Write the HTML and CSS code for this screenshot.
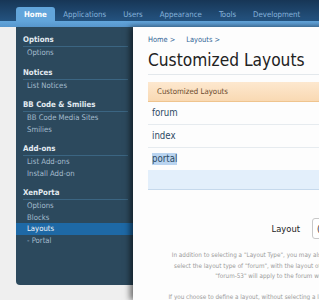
FILE: index.html
```html
<!DOCTYPE html>
<html lang="en">
<head>
    <meta charset="UTF-8">
    <meta name="viewport" content="width=device-width, initial-scale=1.0">
    <title>Customized Layouts</title>
    <link rel="stylesheet" href="styles.css">
</head>
<body>
    <div class="topBar">
        <div class="tabs">
            <a class="tab active" href="#">Home</a>
            <a class="tab" href="#">Applications</a>
            <a class="tab" href="#">Users</a>
            <a class="tab" href="#">Appearance</a>
            <a class="tab" href="#">Tools</a>
            <a class="tab" href="#">Development</a>
        </div>
    </div>
    <div class="tabStrip"></div>

    <div class="page">
        <div class="sideNav">
            <div class="navGroup">
                <div class="navHeading">Options</div>
                <a class="navItem" href="#">Options</a>
            </div>
            <div class="navGroup">
                <div class="navHeading">Notices</div>
                <a class="navItem" href="#">List Notices</a>
            </div>
            <div class="navGroup">
                <div class="navHeading">BB Code &amp; Smilies</div>
                <a class="navItem" href="#">BB Code Media Sites</a>
                <a class="navItem" href="#">Smilies</a>
            </div>
            <div class="navGroup">
                <div class="navHeading">Add-ons</div>
                <a class="navItem" href="#">List Add-ons</a>
                <a class="navItem" href="#">Install Add-on</a>
            </div>
            <div class="navGroup">
                <div class="navHeading">XenPorta</div>
                <a class="navItem" href="#">Options</a>
                <a class="navItem" href="#">Blocks</a>
                <a class="navItem selected" href="#">Layouts</a>
                <a class="navItem" href="#">- Portal</a>
            </div>
        </div>

        <div class="panel">
            <div class="crumbs">
                <a href="#">Home &gt;</a>
                <a href="#">Layouts &gt;</a>
            </div>
            <h1 class="title">Customized Layouts</h1>

            <div class="listHead">Customized Layouts</div>
            <div class="listRow">forum</div>
            <div class="listRow">index</div>
            <div class="listRow last"><span class="picked">portal</span></div>
            <div class="listFoot"></div>

            <div class="formRow">
                <div class="formLabel">Layout</div>
                <div class="formInput">(none)</div>
            </div>
            <div class="explain">
                <p>In addition to selecting a "Layout Type", you may also define a layout. If you<br>
                select the layout type of "forum", with the layout of "forum-53", the layout<br>
                "forum-53" will apply to the forum with ID 53.</p>
                <p>If you choose to define a layout, without selecting a layout type, it will then be</p>
            </div>
        </div>
    </div>
</body>
</html>
```

FILE: styles.css
```css
*{
    margin: 0px;
    padding: 0px;
    box-sizing: border-box;
}
body{
    width: 319px;
    height: 300px;
    overflow: hidden;
    background-color: #efefef;
    font-family: "DejaVu Sans", Verdana, sans-serif;
    font-stretch: condensed;
}
a{
    text-decoration: none;
}
.topBar{
    height: 21px;
    background: linear-gradient(#173656, #245380);
}
.tabs{
    display: flex;
    align-items: flex-end;
    height: 21px;
    padding-left: 16px;
}
.tab{
    height: 14px;
    line-height: 15px;
    padding: 0 8.5px;
    font-size: 7.8px;
    color: #86b3dc;
    border-radius: 3px 3px 0 0;
}
.tab.active{
    padding: 0 8px;
    background-color: #62a5db;
    color: white;
    font-weight: bold;
}
.tabStrip{
    height: 6px;
    background: linear-gradient(#62a5db, #5796cc);
}
.page{
    display: flex;
    align-items: flex-start;
    padding-left: 16px;
}
.sideNav{
    flex-shrink: 0;
    width: 117px;
    height: 258px;
    padding-top: 7px;
    background-color: #2c495d;
    border-radius: 0 0 0 4px;
}
.navGroup{
    display: flex;
    flex-direction: column;
    margin-bottom: 8px;
}
.navHeading{
    height: 13px;
    line-height: 12px;
    margin: 0 5px 0 7px;
    font-size: 7.8px;
    font-weight: bold;
    color: #e3ebf1;
    border-bottom: 1px solid #3b6582;
}
.navItem{
    height: 11.5px;
    line-height: 11.5px;
    padding-left: 11px;
    font-size: 7.7px;
    color: #a4bccd;
}
.navItem.selected{
    background-color: #1e69a6;
    color: #eef4f9;
}
.panel{
    flex-shrink: 0;
    position: relative;
    z-index: 1;
    width: 440px;
    height: 273px;
    padding: 8px 0 0 15px;
    background-color: #fdfdfd;
    box-shadow: -3px 0 6px rgba(0, 0, 0, 0.55);
}
.crumbs{
    display: flex;
    gap: 11px;
    height: 10px;
    line-height: 10px;
    font-size: 7.4px;
}
.crumbs a{
    color: #2f6395;
}
.title{
    margin-top: 5px;
    height: 25px;
    line-height: 20px;
    font-size: 17.2px;
    font-weight: normal;
    color: #222;
    border-bottom: 1px solid #e3e8ec;
}
.listHead{
    margin-top: 7px;
    height: 20px;
    line-height: 19px;
    padding-left: 9px;
    font-size: 7.8px;
    color: #6b4a2b;
    background: linear-gradient(#fde8cf, #f9d9b3);
    border-bottom: 1px solid #efc48e;
}
.listRow{
    height: 23px;
    line-height: 22px;
    padding-left: 4px;
    font-size: 9.6px;
    color: #2d4a64;
    border-bottom: 1px solid #e6ebef;
}
.listRow.last{
    height: 22px;
    border-bottom: none;
}
.picked{
    display: inline-block;
    line-height: 12px;
    background-color: #b9d4f0;
}
.listFoot{
    height: 20px;
    background-color: #e3effb;
    border-bottom: 1px solid #c6d9ec;
}
.formRow{
    display: flex;
    align-items: center;
    gap: 12px;
    margin-top: 28px;
}
.formLabel{
    width: 152px;
    text-align: right;
    font-size: 9.3px;
    color: #222;
}
.formInput{
    width: 120px;
    height: 21px;
    line-height: 19px;
    padding-left: 4px;
    font-size: 9.3px;
    color: #333;
    background-color: white;
    border: 1px solid #c8c8c8;
    border-radius: 3px;
}
.explain{
    width: 264px;
    margin-top: 11px;
    text-align: center;
    font-size: 6.3px;
    line-height: 10.5px;
    color: #9a9a9a;
}
.explain p{
    margin-bottom: 10.5px;
    white-space: nowrap;
}
```
